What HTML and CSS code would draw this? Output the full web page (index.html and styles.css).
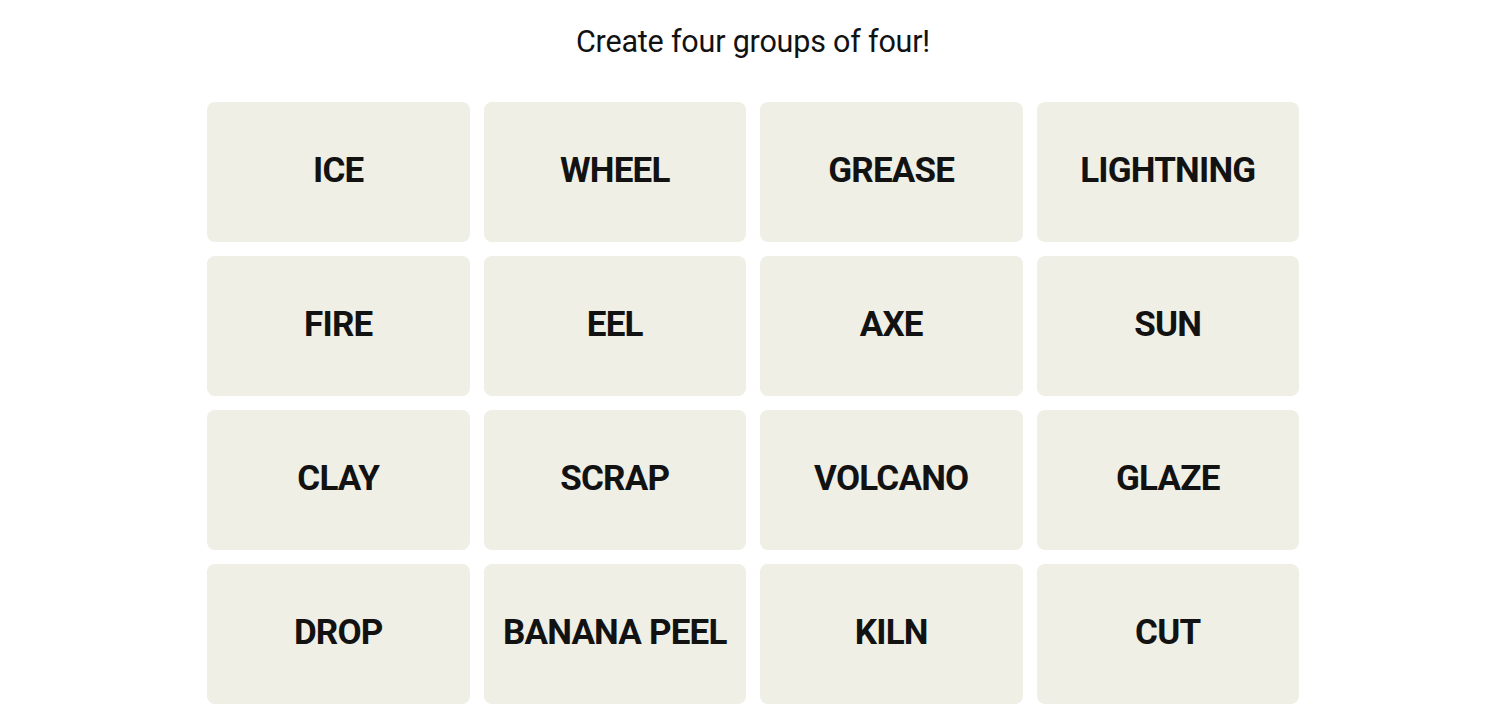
FILE: index.html
```html
<!DOCTYPE html>
<html lang="en">
<head>
    <meta charset="UTF-8">
    <meta name="viewport" content="width=device-width, initial-scale=1.0">
    <title>Connections</title>
    <link rel="stylesheet" href="styles.css">
</head>
<body>
    <div class="game">
        <p class="prompt">Create four groups of four!</p>

        <div class="board">
            <button class="tile">ICE</button>
            <button class="tile">WHEEL</button>
            <button class="tile">GREASE</button>
            <button class="tile">LIGHTNING</button>

            <button class="tile">FIRE</button>
            <button class="tile">EEL</button>
            <button class="tile">AXE</button>
            <button class="tile">SUN</button>

            <button class="tile">CLAY</button>
            <button class="tile">SCRAP</button>
            <button class="tile">VOLCANO</button>
            <button class="tile">GLAZE</button>

            <button class="tile">DROP</button>
            <button class="tile">BANANA PEEL</button>
            <button class="tile">KILN</button>
            <button class="tile">CUT</button>
        </div>
    </div>
</body>
</html>
```

FILE: styles.css
```css
body {
    background-color: #ffffff;
    font-family: Roboto, 'Liberation Sans', sans-serif;
    color: #121212;
    margin: 0;
    padding: 0 0 0 6px;
}

.game {
    display: flex;
    flex-direction: column;
    align-items: center;
}

.prompt {
    margin: 22px 0 0 0;
    font-size: 30.5px;
    line-height: 40px;
    letter-spacing: -0.2px;
    text-align: center;
}

.board {
    display: grid;
    grid-template-columns: repeat(4, 262.5px);
    grid-auto-rows: 140px;
    gap: 14px;
    margin-top: 40px;
}

.tile {
    background-color: #efefe6;
    border: none;
    border-radius: 8px;
    font-family: Roboto, 'Liberation Sans', sans-serif;
    font-weight: bold;
    font-size: 35px;
    letter-spacing: -0.8px;
    color: #121212;
    text-transform: uppercase;
    cursor: pointer;
    padding: 0 0 4px 0;
}
```
